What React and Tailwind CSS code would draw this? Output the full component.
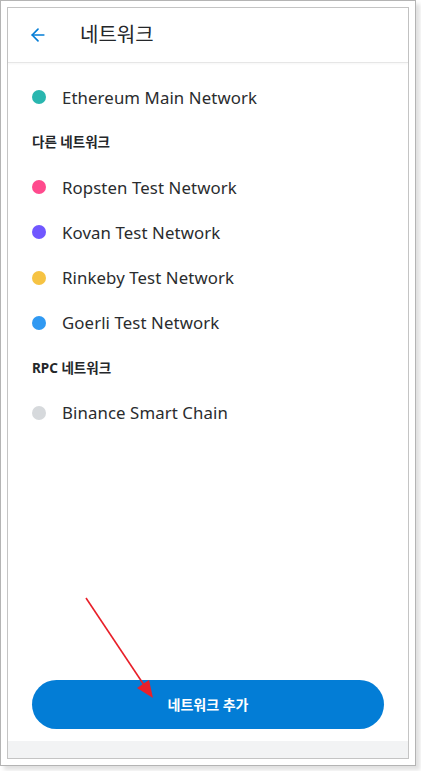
import { ArrowLeft } from 'lucide-react';

const main = { name: 'Ethereum Main Network', color: 'bg-[#29b6af]' };

const sections = [
  {
    title: '다른 네트워크',
    items: [
      { name: 'Ropsten Test Network', color: 'bg-[#ff4a8d]' },
      { name: 'Kovan Test Network', color: 'bg-[#7057ff]' },
      { name: 'Rinkeby Test Network', color: 'bg-[#f6c343]' },
      { name: 'Goerli Test Network', color: 'bg-[#3099f2]' },
    ],
  },
  {
    title: 'RPC 네트워크',
    items: [{ name: 'Binance Smart Chain', color: 'bg-[#d6d9dc]' }],
  },
];

const NetworkRow = ({ item }) => (
  <div className="flex items-center h-[45.2px] pl-[24px]">
    <span className={`w-[14px] h-[14px] rounded-full ${item.color}`} />
    <span className="ml-[16px] text-[16.8px] text-[#2a2c2e] tracking-[0.1px]">{item.name}</span>
  </div>
);

export default function App() {
  return (
    <div
      className="relative w-[421px] h-[771px] bg-white"
      style={{ fontFamily: '"Noto Sans", "Noto Sans CJK KR", sans-serif' }}
    >
      <div className="w-[416px] h-[766px] border border-[#b4b4b4] bg-white p-[6px] shadow-[4px_4px_4px_rgba(0,0,0,0.12)]">
        <div className="h-full border border-[#c4c4c4] flex flex-col">
          <header className="flex items-center h-[55px] border-b border-[#e6e6e6] shadow-[0_1px_2px_rgba(0,0,0,0.04)]">
            <ArrowLeft className="ml-[20px] w-[20px] h-[20px] text-[#037dd6]" strokeWidth={2} />
            <h1 className="ml-[32px] text-[20px] text-[#24272a] font-normal">네트워크</h1>
          </header>

          <div className="flex-1 flex flex-col pt-[11.5px]">
            <NetworkRow item={main} />
            {sections.map((s) => (
              <div key={s.title}>
                <div className="h-[45px] flex items-center pl-[24px] text-[13.5px] font-bold text-[#24272a]">
                  {s.title}
                </div>
                {s.items.map((item) => (
                  <NetworkRow key={item.name} item={item} />
                ))}
              </div>
            ))}
          </div>

          <div className="px-[24px] pb-[12px]">
            <button className="w-full h-[49px] rounded-full bg-[#037dd6] text-white text-[14px] font-bold">
              네트워크 추가
            </button>
          </div>
          <div className="h-[17px] bg-[#f2f3f4]" />
        </div>
      </div>

      <svg className="absolute left-0 top-0 pointer-events-none" width="421" height="771">
        <line x1="86" y1="598" x2="146" y2="688" stroke="#e8202a" strokeWidth="1.6" />
        <polygon points="153,698 137,688 149,680" fill="#e8202a" />
      </svg>
    </div>
  );
}
